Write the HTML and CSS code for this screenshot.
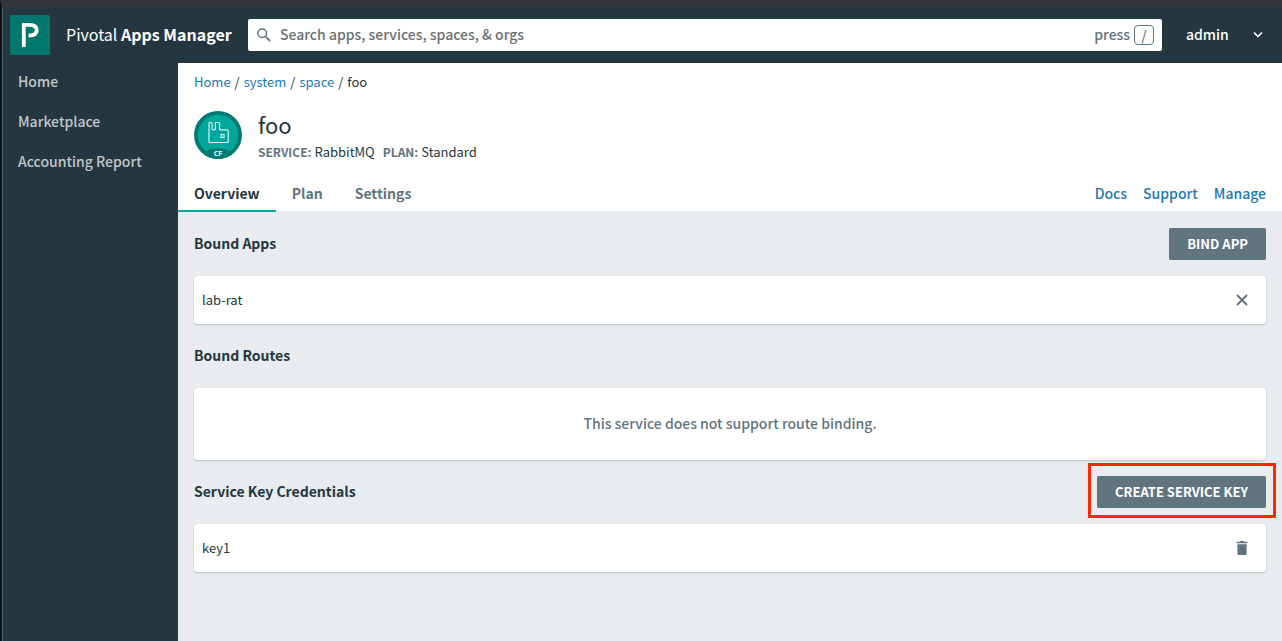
FILE: index.html
```html
<!DOCTYPE html>
<html lang="en">
<head>
<meta charset="utf-8">
<meta name="viewport" content="width=device-width, initial-scale=1">
<title>Pivotal Apps Manager</title>
<link rel="stylesheet" href="styles.css">
</head>
<body>
<div class="window">
  <header class="topbar">
    <a class="brand" href="#">
      <svg class="brand-logo" viewBox="0 0 40 40" aria-hidden="true">
        <rect width="40" height="40" rx="1.5" fill="#00786e"/>
        <path d="M13.8 32V9.8H19.6C24.4 9.8 26.7 11.8 26.7 15.2C26.7 18.8 24 20.5 18.6 20.5" fill="none" stroke="#fff" stroke-width="3.8"/>
      </svg>
      <span class="brand-name">Pivotal <strong>Apps Manager</strong></span>
    </a>
    <label class="search">
      <svg class="search-icon" viewBox="0 0 16 16" aria-hidden="true"><circle cx="6.2" cy="6.2" r="4.3" fill="none" stroke="#607580" stroke-width="1.5"/><path d="M9.4 9.4L14 14" stroke="#607580" stroke-width="1.8"/></svg>
      <input class="search-input" type="text" aria-label="Search" placeholder="Search apps, services, spaces, &amp; orgs">
      <span class="search-hint">press <kbd class="key">/</kbd></span>
    </label>
    <button class="user" type="button">
      <span>admin</span>
      <svg class="user-chevron" viewBox="0 0 10 10" aria-hidden="true"><path d="M1 3.5L5 7.5L9 3.5" fill="none" stroke="#fff" stroke-width="1.6"/></svg>
    </button>
  </header>
  <div class="body">
    <nav class="sidebar">
      <a class="sidebar-link" href="#">Home</a>
      <a class="sidebar-link" href="#">Marketplace</a>
      <a class="sidebar-link" href="#">Accounting Report</a>
    </nav>
    <main class="main">
      <div class="intro">
        <nav class="crumbs" aria-label="Breadcrumb">
          <a class="link" href="#">Home</a><span>/</span><a class="link" href="#">system</a><span>/</span><a class="link" href="#">space</a><span>/</span><span>foo</span>
        </nav>
        <div class="service">
          <svg class="service-logo" viewBox="0 0 48 48" aria-hidden="true">
            <defs><clipPath id="disc"><circle cx="24" cy="24" r="24"/></clipPath></defs>
            <circle cx="24" cy="24" r="24" fill="#007d73"/>
            <circle cx="24" cy="24" r="20" fill="#00a79d"/>
            <ellipse cx="24" cy="46" rx="16" ry="9" fill="#007d73" clip-path="url(#disc)"/>
            <path d="M15 12.2Q15 11.5 15.7 11.5H17.3Q18 11.5 18 12.2V17.8Q18 18.8 19 18.8H20.4Q21.4 18.8 21.4 17.8V12.2Q21.4 11.5 22.1 11.5H24.8Q25.6 11.5 25.6 12.2V17.8Q25.6 18.8 26.6 18.8H33.2Q34.2 18.8 34.2 19.8V30.5Q34.2 31.5 33.2 31.5H16Q15 31.5 15 30.5Z" fill="none" stroke="#d5f3f0" stroke-width="1.2"/>
            <rect x="27" y="23.5" width="3" height="3" fill="none" stroke="#d5f3f0" stroke-width="1.2"/>
            <text class="service-tag" x="24" y="44.5" text-anchor="middle">CF</text>
          </svg>
          <div>
            <h1 class="service-name">foo</h1>
            <dl class="facts">
              <div class="fact"><dt>SERVICE:</dt><dd>RabbitMQ</dd></div>
              <div class="fact"><dt>PLAN:</dt><dd>Standard</dd></div>
            </dl>
          </div>
        </div>
        <div class="tabrow">
          <div class="tabs" role="tablist">
            <button class="tab tab-active" type="button" role="tab" aria-selected="true">Overview</button>
            <button class="tab" type="button" role="tab" aria-selected="false">Plan</button>
            <button class="tab" type="button" role="tab" aria-selected="false">Settings</button>
          </div>
          <div class="actions">
            <a class="link" href="#">Docs</a>
            <a class="link" href="#">Support</a>
            <a class="link" href="#">Manage</a>
          </div>
        </div>
      </div>
      <div class="panels">
        <section>
          <div class="section-head"><h2 class="section-title">Bound Apps</h2><button class="btn" type="button">BIND APP</button></div>
          <div class="card">
            <span>lab-rat</span>
            <button class="icon-btn" type="button" aria-label="Unbind lab-rat"><svg class="icon" viewBox="0 0 16 16" aria-hidden="true"><path d="M3 3L13 13M13 3L3 13" stroke="#607580" stroke-width="1.9"/></svg></button>
          </div>
        </section>
        <section>
          <div class="section-head"><h2 class="section-title">Bound Routes</h2></div>
          <div class="card card-empty">This service does not support route binding.</div>
        </section>
        <section>
          <div class="section-head"><h2 class="section-title">Service Key Credentials</h2><div class="callout"><button class="btn" type="button">CREATE SERVICE KEY</button></div></div>
          <div class="card">
            <span>key1</span>
            <button class="icon-btn" type="button" aria-label="Delete key1"><svg class="icon" viewBox="0 0 16 16" aria-hidden="true"><path d="M2.6 1.8H5.6L6.3 1H9.7L10.4 1.8H13.4V3.2H2.6ZM3.4 4.2H12.6V13.5Q12.6 15 11.2 15H4.8Q3.4 15 3.4 13.5Z" fill="#607580"/></svg></button>
          </div>
        </section>
      </div>
    </main>
  </div>
</div>
</body>
</html>
```
FILE: styles.css
```css
* {
  box-sizing: border-box;
}

body {
  margin: 0;
  font-family: "Noto Sans CJK SC", "Noto Sans", sans-serif;
  font-size: 13px;
  line-height: 20px;
  color: #243640;
  background: #243640;
}

button,
input,
kbd {
  font: inherit;
  color: inherit;
}

button {
  margin: 0;
  border: 0;
  padding: 0;
  background: none;
  cursor: pointer;
}

a {
  text-decoration: none;
}

h1,
h2,
dl,
dd {
  margin: 0;
}

.window {
  display: flex;
  flex-direction: column;
  min-height: 100vh;
  border-top: 7px solid #333639;
  border-left: 2px solid #0b1114;
  box-shadow: inset 1px 0 #50656a;
}

.topbar {
  display: flex;
  align-items: center;
  height: 56px;
  padding: 0 16px 0 8px;
  color: #fff;
  font-size: 14px;
  font-weight: 500;
}

.brand {
  display: flex;
  align-items: center;
  gap: 16px;
  width: 238px;
  flex: none;
  color: #fff;
  font-size: 16px;
  font-weight: 400;
}

.brand-logo {
  width: 40px;
  height: 40px;
}

.brand-name {
  padding-bottom: 3px;
}

.search {
  display: flex;
  flex: 1;
  align-items: center;
  gap: 8px;
  height: 32px;
  padding: 0 8px;
  border-radius: 2px;
  background: #fff;
  color: #607580;
}

.search-icon {
  width: 16px;
  height: 16px;
}

.search-input {
  flex: 1;
  min-width: 0;
  border: 0;
  padding: 0 0 2px;
  outline: 0;
  background: none;
}

.search-input::placeholder {
  color: #6b6f72;
  opacity: 1;
}

.search-hint {
  display: flex;
  gap: 4px;
  line-height: 18px;
}

.key {
  width: 20px;
  height: 20px;
  border: 1px solid #607580;
  border-radius: 4px;
  text-align: center;
}

.user {
  display: flex;
  align-items: center;
  justify-content: space-between;
  width: 80px;
  margin-left: 24px;
  padding: 0 3px 2px 0;
}

.user-chevron {
  width: 10px;
  height: 10px;
}

.body {
  display: flex;
  flex: 1;
}

.sidebar {
  display: flex;
  flex: none;
  flex-direction: column;
  gap: 20px;
  width: 176px;
  padding: 8px 16px;
}

.sidebar-link {
  color: #c3c7c9;
  font-size: 14px;
  font-weight: 500;
}

.main {
  display: flex;
  flex: 1;
  flex-direction: column;
  min-width: 0;
  background: #e8ecef;
}

.intro {
  padding: 9px 16px 0;
  background: #fff;
}

.link {
  color: #1b78b3;
}

.crumbs {
  display: flex;
  gap: 4px;
}

.service {
  display: flex;
  gap: 16px;
  padding: 19px 0 13px;
}

.service-logo {
  width: 48px;
  height: 48px;
}

.service-tag {
  fill: #fff;
  font-family: "Open Sans", sans-serif;
  font-size: 7px;
  font-weight: 700;
}

.service-name {
  font-size: 22px;
  font-weight: 400;
  line-height: 26px;
}

.facts {
  display: flex;
  gap: 8px;
  padding-top: 5px;
}

.fact {
  display: flex;
  align-items: baseline;
  gap: 3px;
}

.fact dt {
  color: #607580;
  font-size: 12px;
  font-weight: 700;
}

.tabrow {
  display: flex;
  justify-content: space-between;
  margin: 0 0 -1px -16px;
  font-size: 14px;
}

.tabs {
  display: flex;
}

.tab {
  height: 37px;
  padding: 0 16px;
  border-bottom: 2px solid transparent;
  color: #607580;
  font-weight: 700;
}

.tab-active {
  border-color: #00a79d;
  color: #243640;
}

.actions {
  display: flex;
  gap: 16px;
  padding-top: 8px;
  font-weight: 500;
}

.panels {
  display: flex;
  flex-direction: column;
  gap: 16px;
  padding: 17px 16px 16px;
}

.section-head {
  display: flex;
  align-items: center;
  justify-content: space-between;
  height: 32px;
  margin-bottom: 16px;
}

.section-title {
  padding-bottom: 2px;
  font-size: 14px;
  font-weight: 700;
}

.btn {
  height: 32px;
  padding: 0 18px;
  border-radius: 2px;
  background: #607580;
  color: #fff;
  font-weight: 700;
}

.callout {
  position: relative;
}

.callout::after {
  content: "";
  position: absolute;
  inset: -13px -10px -10px -9px;
  border: 3px solid #ff2600;
  pointer-events: none;
}

.card {
  display: flex;
  align-items: center;
  justify-content: space-between;
  min-height: 48px;
  padding: 0 16px 0 8px;
  border-radius: 4px;
  background: #fff;
  box-shadow: 0 1px 2px rgba(36, 54, 64, 0.25);
}

.card-empty {
  justify-content: center;
  min-height: 72px;
  padding: 0 16px 2px;
  color: #607580;
  font-size: 14px;
  font-weight: 500;
}

.icon-btn {
  display: flex;
}

.icon {
  width: 16px;
  height: 16px;
}
```
